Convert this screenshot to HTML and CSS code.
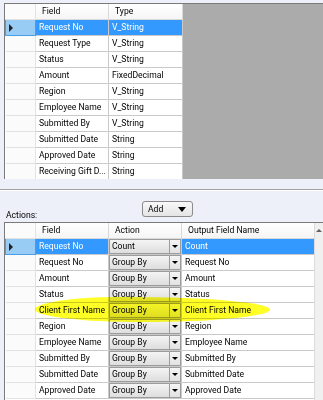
FILE: index.html
```html
<!DOCTYPE html>
<html lang="en">
<head>
  <meta charset="UTF-8" />
  <title>Summarize Fields</title>
  <link rel="stylesheet" href="styles.css">
</head>
<body>
  <div class="fields-panel">
    <table class="grid fields">
      <colgroup><col class="w-sel"><col class="w-field"><col class="w-type"></colgroup>
      <tr class="head">
        <td class="sel"></td><td>Field</td><td>Type</td>
      </tr>
      <tr class="current">
        <td class="sel"><span class="arrow"></span></td><td>Request No</td><td>V_String</td>
      </tr>
      <tr><td class="sel"></td><td>Request Type</td><td>V_String</td></tr>
      <tr><td class="sel"></td><td>Status</td><td>V_String</td></tr>
      <tr><td class="sel"></td><td>Amount</td><td>FixedDecimal</td></tr>
      <tr><td class="sel"></td><td>Region</td><td>V_String</td></tr>
      <tr><td class="sel"></td><td>Employee Name</td><td>V_String</td></tr>
      <tr><td class="sel"></td><td>Submitted By</td><td>V_String</td></tr>
      <tr><td class="sel"></td><td>Submitted Date</td><td>String</td></tr>
      <tr><td class="sel"></td><td>Approved Date</td><td>String</td></tr>
      <tr><td class="sel"></td><td>Receiving Gift D...</td><td>String</td></tr>
    </table>
  </div>

  <div class="divider"></div>

  <div class="toolbar">
    <span class="label">Actions:</span>
    <button class="add-btn">Add <span class="tri"></span></button>
  </div>

  <div class="actions-panel">
    <table class="grid actions">
      <colgroup><col class="w-sel"><col class="w-field"><col class="w-action"><col class="w-out"></colgroup>
      <tr class="head">
        <td class="sel"></td><td>Field</td><td>Action</td><td>Output Field Name</td>
      </tr>
      <tr class="current">
        <td class="sel"><span class="arrow"></span></td><td>Request No</td>
        <td class="combo-cell"><div class="combo"><span>Count</span><i></i></div></td><td>Count</td>
      </tr>
      <tr><td class="sel"></td><td>Request No</td><td class="combo-cell"><div class="combo"><span>Group By</span><i></i></div></td><td>Request No</td></tr>
      <tr><td class="sel"></td><td>Amount</td><td class="combo-cell"><div class="combo"><span>Group By</span><i></i></div></td><td>Amount</td></tr>
      <tr><td class="sel"></td><td>Status</td><td class="combo-cell"><div class="combo"><span>Group By</span><i></i></div></td><td>Status</td></tr>
      <tr><td class="sel"></td><td>Client First Name</td><td class="combo-cell"><div class="combo"><span>Group By</span><i></i></div></td><td>Client First Name</td></tr>
      <tr><td class="sel"></td><td>Region</td><td class="combo-cell"><div class="combo"><span>Group By</span><i></i></div></td><td>Region</td></tr>
      <tr><td class="sel"></td><td>Employee Name</td><td class="combo-cell"><div class="combo"><span>Group By</span><i></i></div></td><td>Employee Name</td></tr>
      <tr><td class="sel"></td><td>Submitted By</td><td class="combo-cell"><div class="combo"><span>Group By</span><i></i></div></td><td>Submitted By</td></tr>
      <tr><td class="sel"></td><td>Submitted Date</td><td class="combo-cell"><div class="combo"><span>Group By</span><i></i></div></td><td>Submitted Date</td></tr>
      <tr><td class="sel"></td><td>Approved Date</td><td class="combo-cell"><div class="combo"><span>Group By</span><i></i></div></td><td>Approved Date</td></tr>
    </table>
    <div class="vscroll"><span class="up"></span></div>
    <div class="highlight"></div>
  </div>
</body>
</html>
```

FILE: styles.css
```css
body {
  margin: 0;
  width: 323px;
  height: 400px;
  overflow: hidden;
  background: #edf0f8;
  font-family: Roboto, "Noto Sans", sans-serif;
  font-size: 8.6px;
  color: #000;
}
.fields-panel {
  margin: 3px 0 0 4px;
  height: 175px;
  background: #ababab;
  border-top: 1px solid #7a7a7a;
  border-left: 1px solid #7a7a7a;
  overflow: hidden;
}
.grid {
  border-collapse: collapse;
  table-layout: fixed;
  background: #fff;
}
.fields { width: 177px; }
.actions { width: 311px; }
.w-sel { width: 30px; }
.w-field { width: 73px; }
.w-type { width: 74px; }
.w-action { width: 73px; }
.w-out { width: 135px; }
.grid td {
  height: 15px;
  padding: 0 0 0 3px;
  border: 1px solid #c9c9c9;
  white-space: nowrap;
  overflow: hidden;
  line-height: 15px;
}
.grid .head td {
  padding-left: 6px;
  background: linear-gradient(#ffffff, #f5f5f5);
  border-color: #d9d9d9;
}
.grid td.sel {
  padding: 0;
  background: #fbfbfb;
  border-color: #e2e2e2;
}
.grid tr:first-child td { border-top: 0; }
.grid td:first-child { border-left: 0; }
.grid .current td {
  background: #3399ff;
  color: #fff;
}
.grid .current td.sel {
  background: #99ccf5;
  border: 1px solid #4a9ee8;
}
.grid .current td.combo-cell {
  background: #fff;
}
.arrow {
  display: block;
  width: 0;
  height: 0;
  margin-left: 3px;
  border-top: 4px solid transparent;
  border-bottom: 4px solid transparent;
  border-left: 4px solid #222;
}
.divider {
  margin-top: 10px;
  border-top: 1px solid #a0a0a0;
  border-bottom: 1px solid #fff;
}
.toolbar {
  display: flex;
  align-items: flex-end;
  height: 29px;
  padding-left: 6px;
}
.label {
  width: 136px;
  line-height: 12px;
  margin-bottom: -1px;
}
.add-btn {
  display: flex;
  align-items: center;
  justify-content: space-between;
  align-self: flex-start;
  margin-top: 10px;
  width: 51px;
  height: 16px;
  padding: 0 6px 0 5px;
  font: inherit;
  color: #000;
  border: 1px solid #8a8a8a;
  border-radius: 3px;
  background: linear-gradient(#f8f8f8, #e4e4e4);
}
.tri {
  width: 0;
  height: 0;
  border-left: 4px solid transparent;
  border-right: 4px solid transparent;
  border-top: 5px solid #000;
}
.actions-panel {
  position: relative;
  margin: 2px 0 0 4px;
  height: 200px;
  border-top: 1px solid #7a7a7a;
  border-left: 1px solid #7a7a7a;
  background: #fff;
}
.grid td.combo-cell {
  padding: 0;
}
.combo {
  display: flex;
  height: 15px;
  border: 1px solid #9c9c9c;
  box-sizing: border-box;
  background: linear-gradient(#f4f4f4, #dedede);
  color: #000;
}
.combo span {
  flex: 1;
  padding-left: 2px;
  line-height: 13px;
}
.combo i {
  position: relative;
  width: 10px;
  border-left: 1px solid #9c9c9c;
  background: linear-gradient(#f4f4f4, #e2e2e2);
}
.combo i::after {
  content: "";
  position: absolute;
  left: 2px;
  top: 5px;
  border-left: 3px solid transparent;
  border-right: 3px solid transparent;
  border-top: 3px solid #000;
}
.vscroll {
  position: absolute;
  top: 0;
  right: 0;
  width: 8px;
  height: 200px;
  background: #f0f0f0;
  border-left: 1px solid #dcdcdc;
}
.up {
  position: absolute;
  left: 1px;
  top: 6px;
  border-left: 3px solid transparent;
  border-right: 3px solid transparent;
  border-bottom: 3px solid #606060;
}
.highlight {
  position: absolute;
  left: 30px;
  top: 74px;
  width: 235px;
  height: 25px;
  border-radius: 35% 60% 55% 45% / 50%;
  background: rgba(255, 255, 0, 0.85);
  mix-blend-mode: multiply;
  pointer-events: none;
}
```
